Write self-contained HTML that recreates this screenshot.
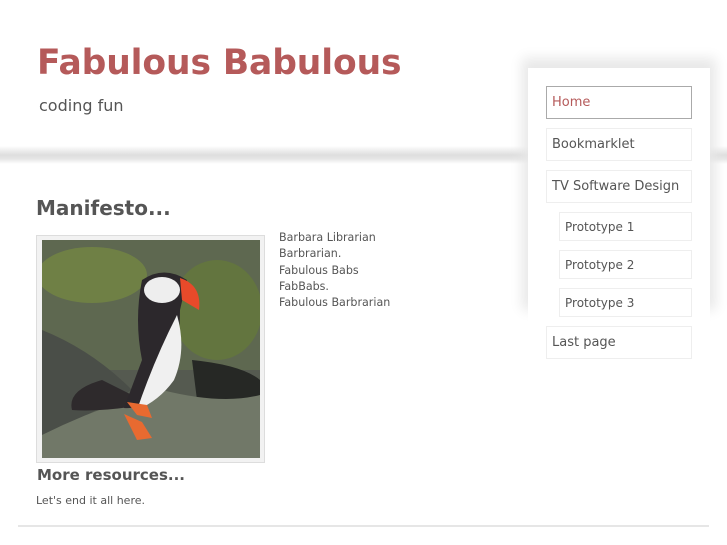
<!DOCTYPE html>
<html><head><meta charset="utf-8"><style>
body{margin:0;width:727px;height:545px;background:#fff;font-family:"DejaVu Sans",Verdana,sans-serif;position:relative;overflow:hidden;color:#555}
.band{position:absolute;left:0;top:146px;width:727px;height:18px;background:linear-gradient(#fff 0,#f3f3f3 3px,#dedede 9px,#e6e6e6 13px,#fff 18px)}
h1{position:absolute;left:37px;top:43px;margin:0;font-family:"DejaVu Sans",sans-serif;font-size:34.5px;font-weight:bold;color:#b55a5a;letter-spacing:-0.1px}
.sub{position:absolute;left:39px;top:96px;font-size:16px;color:#555}
.side{position:absolute;left:528px;top:68px;width:182px;height:240px;background:#fff;box-shadow:0 -4px 12px 6px #e8e8e8}
.side2{position:absolute;left:528px;top:68px;width:182px;height:300px;background:#fff}
.nav{position:absolute;border:1px solid #eee;background:#fff;font-size:13px;color:#555;box-sizing:border-box;padding-left:5px;display:flex;align-items:center}
.nav.s{font-size:12px;padding-left:5px}
h2{position:absolute;margin:0;left:36px;top:196px;font-size:20px;font-weight:bold;color:#555}
h3{position:absolute;margin:0;left:37px;top:466px;font-size:15px;font-weight:bold;color:#555}
.txt{position:absolute;left:279px;top:230px;font-size:11.1px;line-height:16.3px;color:#555}
.end{position:absolute;left:36px;top:494px;font-size:11px;color:#555}
.hr{position:absolute;left:18px;top:525px;width:691px;height:2px;background:#e6e6e6}
.frame{position:absolute;left:36px;top:235px;width:227px;height:226px;border:1px solid #ddd;background:#f2f2f2}
</style></head><body>
<div class="band"></div>
<h1>Fabulous Babulous</h1>
<div class="sub">coding fun</div>
<div class="side"></div><div class="side2"></div>
<div class="nav" style="left:546px;top:86px;width:146px;height:33px;border:1px solid #aaa;color:#b55a5a">Home</div>
<div class="nav" style="left:546px;top:128px;width:146px;height:33px">Bookmarklet</div>
<div class="nav" style="left:546px;top:170px;width:146px;height:33px">TV Software Design</div>
<div class="nav s" style="left:559px;top:212px;width:133px;height:29px">Prototype 1</div>
<div class="nav s" style="left:559px;top:250px;width:133px;height:29px">Prototype 2</div>
<div class="nav s" style="left:559px;top:288px;width:133px;height:29px">Prototype 3</div>
<div class="nav" style="left:546px;top:326px;width:146px;height:33px">Last page</div>
<h2>Manifesto...</h2>
<div class="frame"><svg style="position:absolute;left:5px;top:4px" width="218" height="218" viewBox="0 0 218 218">
<rect width="218" height="218" fill="#555a50"/>
<rect width="218" height="130" fill="#5e6850"/>
<ellipse cx="50" cy="35" rx="55" ry="28" fill="#6f8045"/>
<ellipse cx="175" cy="70" rx="45" ry="50" fill="#63753f"/>
<path d="M0 90 Q50 110 90 150 L0 200Z" fill="#4a4e48"/>
<path d="M150 120 Q200 125 218 140 L218 200 L160 200Z" fill="#262825"/>
<path d="M0 218 L0 195 Q60 165 120 150 Q180 165 218 155 L218 218Z" fill="#717868"/>
<path d="M100 160 L60 140 Q25 150 30 170 Q60 172 100 165Z" fill="#2e2a2c"/>
<path d="M100 40 Q122 25 145 40 L138 70 Q138 120 122 150 Q100 170 82 168 L100 120 Q92 80 100 40Z" fill="#2c282c"/>
<path d="M135 75 Q145 110 132 140 Q118 160 95 170 Q112 120 135 75Z" fill="#f0f0f0"/>
<ellipse cx="120" cy="50" rx="18" ry="13" fill="#eee"/>
<path d="M138 38 Q160 45 157 70 L140 60Z" fill="#e84a2a"/>
<path d="M85 162 L105 165 L110 178 L95 175Z M82 174 L100 182 L110 198 L95 200Z" fill="#e86a30"/>
</svg></div>
<div class="txt">Barbara Librarian<br>Barbrarian.<br>Fabulous Babs<br>FabBabs.<br>Fabulous Barbrarian</div>
<h3>More resources...</h3>
<div class="end">Let's end it all here.</div>
<div class="hr"></div>
</body></html>
